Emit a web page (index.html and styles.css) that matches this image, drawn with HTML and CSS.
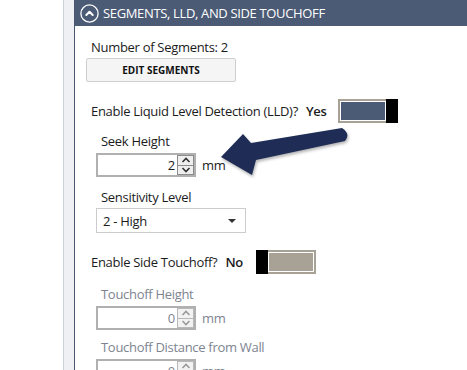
FILE: index.html
```html
<!DOCTYPE html>
<html lang="en">
<head>
    <meta charset="UTF-8">
    <title>Segments, LLD, and Side Touchoff</title>
    <link rel="stylesheet" href="styles.css">
</head>
<body>

    <div class="gutter"></div>
    <div class="rail"></div>

    <!-- Settings panel -->
    <div class="panel">
        <div class="panel-header">
            <svg class="collapse-icon" width="19" height="19" viewBox="0 0 19 19">
                <circle cx="9.5" cy="9.5" r="8.6" fill="none" stroke="#fff" stroke-width="1.3"/>
                <path d="M6.3 11 L9.5 7.8 L12.7 11" fill="none" stroke="#fff" stroke-width="2" stroke-linecap="round" stroke-linejoin="round"/>
            </svg>
            <span class="panel-title">SEGMENTS, LLD, AND SIDE TOUCHOFF</span>
        </div>

        <div class="panel-body">
            <div class="count">Number of Segments: 2</div>
            <button class="btn">EDIT SEGMENTS</button>

            <div class="toggle-row lld-row">
                <span>Enable Liquid Level Detection (LLD)?</span>
                <span class="state">Yes</span>
                <span class="toggle on"><span class="track"></span><span class="knob"></span></span>
            </div>

            <div class="field first">
                <div class="label">Seek Height</div>
                <div class="num-row">
                    <div class="num">
                        <span class="value">2</span>
                        <span class="spin">
                            <span class="spin-btn"><svg width="10" height="6" viewBox="0 0 10 6"><path d="M1.5 5 L5 1.5 L8.5 5" fill="none" stroke="currentColor" stroke-width="1.6"/></svg></span>
                            <span class="spin-btn"><svg width="10" height="6" viewBox="0 0 10 6"><path d="M1.5 1 L5 4.5 L8.5 1" fill="none" stroke="currentColor" stroke-width="1.6"/></svg></span>
                        </span>
                    </div>
                    <span class="unit">mm</span>
                </div>
            </div>

            <div class="field">
                <div class="label">Sensitivity Level</div>
                <div class="select">
                    <span>2 - High</span>
                    <span class="caret"></span>
                </div>
            </div>

            <div class="toggle-row side-row">
                <span>Enable Side Touchoff?</span>
                <span class="state">No</span>
                <span class="toggle off"><span class="knob"></span><span class="track"></span></span>
            </div>

            <div class="field disabled">
                <div class="label">Touchoff Height</div>
                <div class="num-row">
                    <div class="num">
                        <span class="value">0</span>
                        <span class="spin">
                            <span class="spin-btn"><svg width="10" height="6" viewBox="0 0 10 6"><path d="M1.5 5 L5 1.5 L8.5 5" fill="none" stroke="currentColor" stroke-width="1.6"/></svg></span>
                            <span class="spin-btn"><svg width="10" height="6" viewBox="0 0 10 6"><path d="M1.5 1 L5 4.5 L8.5 1" fill="none" stroke="currentColor" stroke-width="1.6"/></svg></span>
                        </span>
                    </div>
                    <span class="unit">mm</span>
                </div>
            </div>

            <div class="field disabled last">
                <div class="label">Touchoff Distance from Wall</div>
                <div class="num-row">
                    <div class="num">
                        <span class="value">0</span>
                        <span class="spin">
                            <span class="spin-btn"><svg width="10" height="6" viewBox="0 0 10 6"><path d="M1.5 5 L5 1.5 L8.5 5" fill="none" stroke="currentColor" stroke-width="1.6"/></svg></span>
                            <span class="spin-btn"><svg width="10" height="6" viewBox="0 0 10 6"><path d="M1.5 1 L5 4.5 L8.5 1" fill="none" stroke="currentColor" stroke-width="1.6"/></svg></span>
                        </span>
                    </div>
                    <span class="unit">mm</span>
                </div>
            </div>
        </div>
    </div>

    <!-- Callout arrow pointing at Seek Height -->
    <svg class="callout" width="140" height="56" viewBox="215 124 140 56">
        <path d="M221 157 L243 134 L251 143 L342 128 Q351 134 345 141 L256 160 L252 175 Z" fill="#1f2d56"/>
    </svg>

</body>
</html>
```

FILE: styles.css
```css
    body {
        margin: 0;
        height: 370px;
        overflow: hidden;
        display: flex;
        background-color: #fff;
        font-family: 'Open Sans', 'Noto Sans', sans-serif;
        font-size: 13px;
        letter-spacing: -0.3px;
        color: #1b1b1b;
    }

    /* Left side strip */
    .gutter {
        width: 63px;
        flex-shrink: 0;
    }

    .rail {
        width: 10px;
        flex-shrink: 0;
        background-color: #eef0f4;
        border-left: 1px solid #cdd1d8;
        border-right: 1px solid #4a5670;
    }

    /* Panel */
    .panel {
        flex: 1;
    }

    .panel-header {
        height: 26px;
        background-color: #4b5a75;
        display: flex;
        align-items: center;
        padding-left: 5px;
        gap: 4px;
        color: #fff;
    }

    .panel-title {
        font-size: 13px;
        letter-spacing: -0.35px;
        white-space: nowrap;
    }

    .panel-body {
        padding-left: 16px;
    }

    .count {
        margin-top: 12px;
        line-height: 18px;
    }

    .btn {
        display: block;
        margin: 2px 0 0 -5px;
        width: 150px;
        height: 24px;
        background-color: #f5f5f5;
        border: 1px solid #cfcfcf;
        border-radius: 2px;
        font-family: inherit;
        font-size: 10px;
        font-weight: bold;
        letter-spacing: 0;
        color: #111;
        padding: 0;
    }

    /* Toggle rows */
    .toggle-row {
        display: flex;
        align-items: center;
        height: 24px;
    }

    .lld-row {
        margin-top: 17px;
    }

    .side-row {
        margin-top: 17px;
    }

    .toggle-row .state {
        font-weight: 600;
        margin-left: 8px;
    }

    .toggle {
        display: flex;
        height: 24px;
        width: 60px;
    }

    .lld-row .toggle {
        margin-left: 11px;
    }

    .side-row .toggle {
        margin-left: 13px;
    }

    .toggle .track {
        flex: 1;
        border: 2px solid #a8a296;
        padding: 1px;
        background-clip: content-box;
    }

    .toggle.on .track {
        background-color: #4b5a75;
        border-right: none;
    }

    .toggle.off .track {
        background-color: #a8a296;
        border-left: none;
    }

    .toggle .knob {
        width: 12px;
        background-color: #000;
    }

    /* Fields */
    .field {
        margin-left: 5px;
        margin-top: 11px;
    }

    .field.first {
        margin-top: 9px;
    }

    .label {
        padding-left: 5px;
        line-height: 18px;
        margin-bottom: 3px;
    }

    .num-row {
        display: flex;
        align-items: center;
        gap: 6px;
    }

    .num {
        display: flex;
        width: 100px;
        height: 24px;
        box-sizing: border-box;
        border: 2px solid #b0b0b0;
        background-color: #fff;
    }

    .num .value {
        flex: 1;
        text-align: right;
        line-height: 20px;
        padding-right: 2px;
    }

    .spin {
        display: flex;
        flex-direction: column;
        width: 17px;
        color: #333;
    }

    .spin-btn {
        flex: 1;
        display: flex;
        align-items: center;
        justify-content: center;
        border: 1px solid #8c8c8c;
        background-color: #efefef;
    }

    .spin-btn + .spin-btn {
        border-top: none;
    }

    .select {
        display: flex;
        align-items: center;
        justify-content: space-between;
        width: 150px;
        height: 25px;
        box-sizing: border-box;
        border: 1px solid #cccccc;
        padding: 0 9px 0 6px;
        margin-top: -1px;
    }

    .caret {
        width: 0;
        height: 0;
        border-left: 4px solid transparent;
        border-right: 4px solid transparent;
        border-top: 4px solid #333;
    }

    .field.disabled {
        color: #7d8490;
    }

    .field.disabled .spin {
        color: #9a9a9a;
    }

    .field.disabled .spin-btn {
        border-color: #b8b8b8;
        background-color: #f2f2f2;
    }

    .side-row + .field {
        margin-top: 11px;
    }

    .field.last {
        margin-top: 8px;
    }

    /* Callout arrow */
    .callout {
        position: absolute;
        left: 215px;
        top: 124px;
        filter: drop-shadow(1px 2px 1.5px rgba(0, 0, 0, 0.3));
    }
```
